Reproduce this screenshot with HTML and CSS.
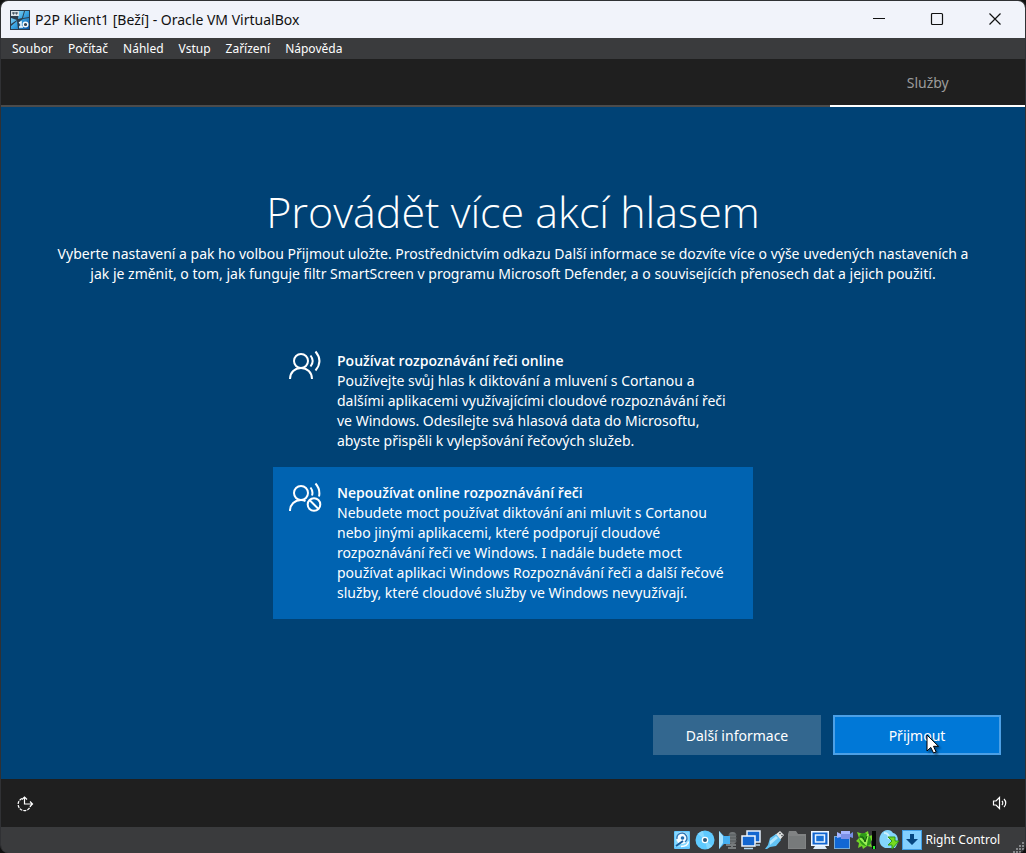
FILE: index.html
```html
<!DOCTYPE html>
<html lang="cs">
<head>
<meta charset="utf-8">
<meta name="viewport" content="width=device-width, initial-scale=1">
<title>P2P Klient1 [Beží] - Oracle VM VirtualBox</title>
<link rel="stylesheet" href="styles.css">
</head>
<body>
<div class="window">
  <header class="titlebar">
    <svg class="app-icon" viewBox="0 0 20 20" aria-hidden="true">
      <defs><linearGradient id="sky" x1="0" y1="0" x2="1" y2="1"><stop offset="0" stop-color="#a9e6fb"/><stop offset=".5" stop-color="#3aa5e2"/><stop offset="1" stop-color="#0d55a5"/></linearGradient></defs>
      <rect width="20" height="20" fill="#2c3d4d"/>
      <path d="M9 1h5l-2 7-4 1zM15 1h4v6l-6 1zM1 8l6 2-6 4zM1 16l6-5 1 8H1zM13 9l6-1v11H9l1-8z" fill="url(#sky)"/>
      <rect x="1" y="1" width="8" height="5" fill="#dce4e8"/>
      <path d="M3 2v2h1V2M6 2v2h1V2" stroke="#345" fill="none"/>
      <path d="M9 13l2-1v5M9 17h4" stroke="#f5fafd" stroke-width="1.5" fill="none"/><circle cx="15.500" cy="14.500" r="2.300" stroke="#f5fafd" stroke-width="1.400" fill="#345"/>
    </svg>
    <h1 class="window-title">P2P Klient1 [Beží] - Oracle VM VirtualBox</h1>
    <div class="window-controls">
      <button class="window-button" aria-label="Minimalizovat"><svg viewBox="0 0 14 14"><path d="M1 6.500h12"/></svg></button>
      <button class="window-button" aria-label="Maximalizovat"><svg viewBox="0 0 14 14"><rect x="1.500" y="1.500" width="11" height="11" rx="1"/></svg></button>
      <button class="window-button" aria-label="Zavřít"><svg viewBox="0 0 14 14"><path d="M1.500 1.500l11 11M12.500 1.500l-11 11"/></svg></button>
    </div>
  </header>
  <nav class="menubar">
    <button class="menu-item">Soubor</button>
    <button class="menu-item">Počítač</button>
    <button class="menu-item">Náhled</button>
    <button class="menu-item">Vstup</button>
    <button class="menu-item">Zařízení</button>
    <button class="menu-item">Nápověda</button>
  </nav>
  <nav class="steps"><a class="step" href="#sluzby">Služby</a></nav>
  <main class="setup" id="sluzby">
    <h2 class="heading">Provádět více akcí hlasem</h2>
    <p class="intro">Vyberte nastavení a pak ho volbou Přijmout uložte. Prostřednictvím odkazu Další informace se dozvíte více o výše uvedených nastaveních a<br>jak je změnit, o tom, jak funguje filtr SmartScreen v programu Microsoft Defender, a o souvisejících přenosech dat a jejich použití.</p>
    <div class="options" role="radiogroup" aria-label="Rozpoznávání řeči">
      <label class="option">
        <input class="option-input" type="radio" name="speech">
        <svg class="option-icon" viewBox="0 0 32 32" aria-hidden="true"><circle cx="12" cy="10" r="7"/><path d="M1 28c0-6.500 4.800-11 11-11s11 4.500 11 11M21.500 4.500c2.800 3.500 2.800 7.500 0 11M26.500.5c5 6 5 13 0 19"/></svg>
        <span class="option-text"><strong class="option-title">Používat rozpoznávání řeči online</strong>Používejte svůj hlas k diktování a mluvení s Cortanou a<br>dalšími aplikacemi využívajícími cloudové rozpoznávání řeči<br>ve Windows. Odesílejte svá hlasová data do Microsoftu,<br>abyste přispěli k vylepšování řečových služeb.</span>
      </label>
      <label class="option">
        <input class="option-input" type="radio" name="speech" checked>
        <svg class="option-icon" viewBox="0 0 32 32" aria-hidden="true"><circle cx="12" cy="10" r="7"/><path d="M1 28c0-6.500 4.800-11 11-11 1.500 0 3 .3 4.500 1M21.500 4.500c2 2.500 2.500 5 1.500 8M26.500.5c3.500 4 4.500 8.500 3.500 13"/><circle cx="25" cy="21.500" r="6.300"/><path d="M20.500 17l9 9"/></svg>
        <span class="option-text"><strong class="option-title">Nepoužívat online rozpoznávání řeči</strong>Nebudete moct používat diktování ani mluvit s Cortanou<br>nebo jinými aplikacemi, které podporují cloudové<br>rozpoznávání řeči ve Windows. I nadále budete moct<br>používat aplikaci Windows Rozpoznávání řeči a další řečové<br>služby, které cloudové služby ve Windows nevyužívají.</span>
      </label>
    </div>
    <div class="actions">
      <button class="action">Další informace</button>
      <button class="action action-primary">Přijmout
        <svg class="pointer" viewBox="0 0 14 20" aria-hidden="true"><path d="M1 1v16l3.800-3.600 2.700 5.600 2.600-1.200-2.600-5.500h5z" fill="#fff" stroke="#000"/></svg>
      </button>
    </div>
  </main>
  <div class="guest-bar">
    <button class="guest-button" aria-label="Usnadnění přístupu"><svg viewBox="0 0 18 18"><path d="M8.500 3v7h8M14 7.500l2.500 2.500-2.500 2.500"/><path d="M6 4.500a6.300 6.300 0 1 0 8.500 7.500" stroke-dasharray="3 1"/><path d="M6 5.500L8.500 3 11 5.500"/></svg></button>
    <button class="guest-button" aria-label="Hlasitost"><svg viewBox="0 0 18 18"><path d="M2.500 7h2.500l3.500-3.500v11L5 11H2.500zM11 7c1 1 1 3 0 4M13 5c2.300 2.200 2.300 5.800 0 8"/></svg></button>
  </div>
  <footer class="statusbar">
    <div class="indicators">
      <svg viewBox="0 0 20 20"><rect x="2" y="1" width="16" height="18" rx="1" fill="#64c7ff"/><path d="M3 2h14v15H3z" fill="#85d8ff"/><circle cx="10" cy="8" r="6" fill="#f5fbff"/><path d="M5 9a5 5 0 1 1 8 3" stroke="#2d78b8" stroke-width="1.500" fill="none"/><circle cx="10.500" cy="8" r="1.800" fill="#216cae"/><path d="M4 16l7-5" stroke="#195c9b" stroke-width="2" fill="none"/><path d="M9 16.500c4 0 7-2 7.500-5" stroke="#fff" stroke-width="1.500" fill="none"/></svg>
      <svg viewBox="0 0 20 20"><circle cx="10" cy="10" r="9.500" fill="#5fcaff"/><path d="M10 10L3 4a9 9 0 0 1 5-3zM10 10l7 6a9 9 0 0 1-5 3z" fill="#83d8ff"/><circle cx="10" cy="10" r="3.300" fill="#fff"/><circle cx="10" cy="10" r="2" fill="#2b5676"/></svg>
      <svg viewBox="0 0 20 20"><rect x="11" y="2" width="7" height="12" rx="3" fill="#717577"/><path d="M10 5h9M9 8h10M10 11h9" stroke="#555a5c"/><path d="M8 15h10M14 14v4M10 18h8" stroke="#777b7c" stroke-width="2"/><path d="M1 1l5 5h6v8H6l-5 5z" fill="#45aff1"/><path d="M1 1v18l4-6V6z" fill="#a6e2ff"/></svg>
      <svg viewBox="0 0 20 20"><rect x="6" y="1" width="13" height="11" fill="#1266d0" stroke="#e5f0fb" stroke-width="1.500"/><path d="M15 15h4" stroke="#b4d5ee" stroke-width="1.500"/><rect x="1" y="6" width="13" height="10" fill="#1266d0" stroke="#f0f6fc" stroke-width="1.500"/><path d="M3 18.500h9" stroke="#b5daf2" stroke-width="1.500"/></svg>
      <svg viewBox="0 0 20 20"><path d="M11 5l5-4 4 4-5 6z" fill="#e3e6e6"/><path d="M15.500 3l1 1M17.500 5l1 1" stroke="#4f5355" stroke-width="1.500"/><path d="M6 8l6-4 5 6-5 6-6 1-3 2H1l3-4z" fill="#62c3f5"/><path d="M6 11l6-5 2 2-8 7z" fill="#b1e6ff"/></svg>
      <svg viewBox="0 0 20 20"><path d="M1 4l1-3h7l2 3h8v15H1z" fill="#818384"/><path d="M2 6h16v12H2z" fill="#777a7b"/></svg>
      <svg viewBox="0 0 20 20"><rect x="1" y="1" width="18" height="15" fill="#eef6ff"/><rect x="2.500" y="2.500" width="15" height="12" fill="#1164cf"/><rect x="5.500" y="5" width="9" height="7" fill="#1870d5" stroke="#e6f2ff" stroke-width="1.500"/><path d="M5 16h10l2 3H3z" fill="#dceaf7"/></svg>
      <svg viewBox="0 0 20 20"><rect x="1.500" y="6.500" width="15" height="12" fill="#1167d4" stroke="#75abd7"/><path d="M8 1h9v8H8zM4 2l4 2v3l-4 1z" fill="#a5b6ff"/><path d="M8 4h9v5H8z" fill="#7d91e7"/><path d="M17 4l3-2v6l-3-1z" fill="#748ee0"/></svg>
      <svg viewBox="0 0 20 20"><path d="M1 2l6 2 5-3 1 5 4-1v4l-3 3 2 5-5-1-4 3-1-3-4 2 1-5-3-2 3-3z" fill="#72d628"/><ellipse cx="9" cy="9.500" rx="5.500" ry="7" transform="rotate(-35 9 9.500)" fill="#2f9c18"/><path d="M4 8l6 6 2-10" stroke="#9cef55" fill="none" stroke-width="2"/><path d="M4 7h3l2 5 2-6" stroke="#13550d" fill="none"/><rect x="16" y="1" width="4" height="18" fill="#050805"/><path d="M18 16v3" stroke="#25f425" stroke-width="2"/></svg>
      <svg viewBox="0 0 20 20"><path d="M2 4c3-5 10-5 12-1 5 1 7 8 2 15H6C0 16-1 9 2 4z" fill="#83d5fb"/><path d="M5 3c4 0 6 3 4 6" stroke="#c9f1ff" fill="none" stroke-width="2"/><path d="M9 7h7v4h4l-7 8v-4H9l4-4-4-4z" fill="#76da20" stroke="#319917"/></svg>
      <svg viewBox="0 0 20 20"><rect x=".5" y=".5" width="19" height="19" fill="#83cfff" stroke="#409de4"/><path d="M8 4h4v5h4l-6 6-6-6h4z" fill="#064681"/></svg>
    </div>
    <span class="host-key">Right Control</span>
    <svg class="grip" viewBox="0 0 12 12" aria-hidden="true"><path d="M9 1h2v2H9zM6 4h2v2H6zM9 4h2v2H9zM3 7h2v2H3zM6 7h2v2H6zM9 7h2v2H9zM0 10h2v2H0zM3 10h2v2H3zM6 10h2v2H6zM9 10h2v2H9z" fill="#85878a"/></svg>
  </footer>
</div>
</body>
</html>
```
FILE: styles.css
```css
* { box-sizing: border-box; }
body { margin: 0; background: #111; font-family: "Noto Sans", "Open Sans", sans-serif; color: #fff; }
button { font: inherit; color: inherit; border: 0; background: none; padding: 0; }
svg { display: block; }

.window {
  min-height: 100vh;
  display: flex;
  flex-direction: column;
  border: 1px solid #303134;
  border-bottom: 0;
  border-radius: 8px;
  overflow: hidden;
  background: #1f1f1f;
}

.titlebar { display: flex; align-items: center; height: 37px; padding-left: 9px; background: #f1f3fa; color: #111; }
.app-icon { width: 20px; height: 20px; }
.window-title { flex: 1; margin: 0 0 0 5px; font-size: 14px; font-weight: 400; line-height: 20px; }
.window-controls { display: flex; align-self: stretch; padding-right: 1px; }
.window-button { display: grid; place-items: center; width: 58px; padding-bottom: 1px; }
.window-button svg { width: 14px; height: 14px; fill: none; stroke: #111; stroke-width: 1.2; }

.menubar { display: flex; gap: 15px; height: 21px; padding-left: 11px; background: #3a3b3d; }
.menu-item { font-size: 12px; line-height: 20px; }

.steps { display: flex; justify-content: flex-end; height: 48px; border-bottom: 2px solid #4b4b4b; }
.step {
  width: 19%;
  height: 48px;
  border-bottom: 2px solid #fff;
  color: #9b9b9b;
  font-size: 14px;
  line-height: 48px;
  text-align: center;
  text-decoration: none;
}

.setup { flex: 1; display: flex; flex-direction: column; align-items: center; padding: 73px 24px 24px; background: #004275; }
.heading { margin: 0; font-family: "Open Sans", "Noto Sans", sans-serif; font-size: 43px; font-weight: 300; line-height: 64px; white-space: nowrap; }
.intro { margin: 0; font-size: 14px; line-height: 20px; text-align: center; white-space: nowrap; }

.options { width: 480px; margin-top: 51px; }
.option { position: relative; display: flex; gap: 16px; padding: 16px; }
.option:has(:checked) { background: #0063b1; }
.option-input { position: absolute; opacity: 0; margin: 0; }
.option-icon { flex: none; width: 32px; height: 32px; fill: none; stroke: #fff; stroke-width: 2; overflow: visible; }
.option-text { font-size: 14px; line-height: 20px; white-space: nowrap; }
.option-title { display: block; font-family: "Open Sans", "Noto Sans", sans-serif; font-weight: 600; }

.actions { display: flex; gap: 12px; align-self: flex-end; margin-top: auto; }
.action { position: relative; width: 168px; height: 40px; background: #33678f; font-size: 14px; }
.action-primary { background: #0078d7; border: 2px solid #4ca0e6; }
.pointer { position: absolute; left: 91px; top: 17px; width: 14px; height: 20px; filter: drop-shadow(2px 2px 1px #0006); }

.guest-bar { display: flex; justify-content: space-between; align-items: center; height: 48px; padding: 0 16px 0 15px; }
.guest-button svg { width: 18px; height: 18px; fill: none; stroke: #fff; stroke-width: 1.2; }

.statusbar { display: flex; align-items: center; justify-content: flex-end; height: 26px; background: #3a3b3d; }
.indicators { display: flex; gap: 3px; }
.indicators svg { width: 20px; height: 20px; }
.host-key { margin: 0 13px 0 4px; font-size: 12px; line-height: 20px; }
.grip { align-self: flex-end; width: 12px; height: 12px; }
```
